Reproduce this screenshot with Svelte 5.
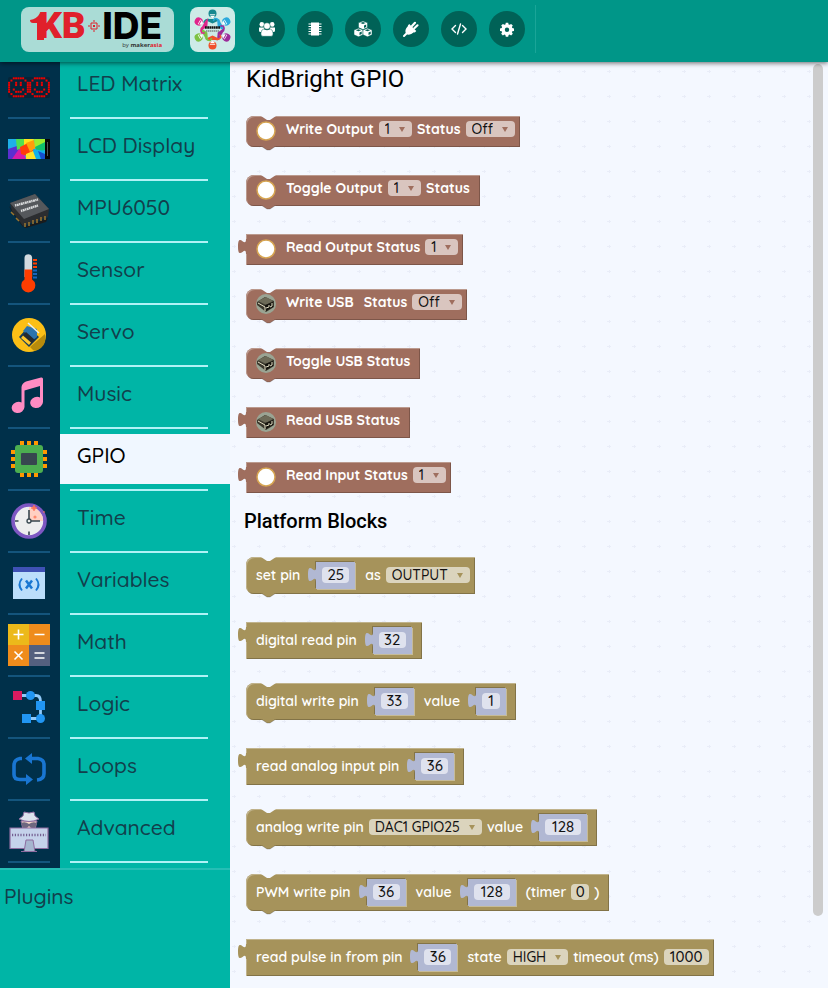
<script>
  const tools = ['Community', 'Board', 'Packages', 'Plugins', 'Source code', 'Settings'];

  const categories = [
    'LED Matrix', 'LCD Display', 'MPU6050', 'Sensor', 'Servo', 'Music', 'GPIO',
    'Time', 'Variables', 'Math', 'Logic', 'Loops', 'Advanced'
  ];
  let selected = $state('GPIO');

  const face = [
    '..#####..',
    '.#.....#.',
    '#..#.#..#',
    '#..#.#..#',
    '#.......#',
    '#.#...#.#',
    '#..###..#',
    '.#.....#.',
    '..#####..'
  ];
  const dots = face.flatMap((row, y) =>
    [...row].flatMap((c, x) => (c === '#' ? [[x, y], [x + 9, y]] : []))
  );

  const text = (t) => ({ kind: 'text', t });
  const drop = (...options) => ({ kind: 'drop', options });
  const num = (value) => ({ kind: 'num', value });
  const field = (value) => ({ kind: 'field', value });
  const pins = ['1', '2'];

  const kidbright = [
    { icon: 'led', parts: [text('Write Output'), drop(...pins), text('Status'), drop('Off', 'On')] },
    { icon: 'led', parts: [text('Toggle Output'), drop(...pins), text('Status')] },
    { icon: 'led', out: true, parts: [text('Read Output Status'), drop(...pins)] },
    { icon: 'usb', parts: [text('Write USB'), text('Status'), drop('Off', 'On')] },
    { icon: 'usb', parts: [text('Toggle USB Status')] },
    { icon: 'usb', out: true, parts: [text('Read USB Status')] },
    { icon: 'led', out: true, parts: [text('Read Input Status'), drop(...pins)] }
  ];
  const platform = [
    { parts: [text('set pin'), num('25'), text('as'), drop('OUTPUT', 'INPUT')] },
    { out: true, parts: [text('digital read pin'), num('32')] },
    { parts: [text('digital write pin'), num('33'), text('value'), num('1')] },
    { out: true, parts: [text('read analog input pin'), num('36')] },
    { parts: [text('analog write pin'), drop('DAC1 GPIO25', 'DAC2 GPIO26'), text('value'), num('128')] },
    { parts: [text('PWM write pin'), num('36'), text('value'), num('128'), text('(timer'), field('0'), text(')')] },
    { out: true, parts: [text('read pulse in from pin'), num('36'), text('state'), drop('HIGH', 'LOW'), text('timeout (ms)'), field('1000')] }
  ];
</script>

{#snippet toolIcon(name)}
  <svg viewBox="0 0 18 18" width="18" height="18" fill="#fff" aria-hidden="true">
    {#if name === 'Community'}
      <circle cx="3.800" cy="4.400" r="2.300" /><circle cx="14.200" cy="4.400" r="2.300" />
      <path d="M1 7.500h5v4.500H2.500Q1 12 1 10.500zM17 7.500h-5v4.500h3.500q1.500 0 1.500-1.500z" />
      <g stroke="#006257" stroke-width=".5"><circle cx="9" cy="6" r="3.300" /><path d="M5 16.300Q2.600 16.300 2.900 13.200q.4-4 2.900-4.200 3.200 1.900 6.400 0 2.500.2 2.900 4.200.3 3.100-2.100 3.100z" /></g>
    {:else if name === 'Board'}
      <path d="M5 2.500h8v13H5zM2.500 3.500h13v1h-13zM2.500 5.900h13v1h-13zM2.500 8.500h13v1h-13zM2.500 11.100h13v1h-13zM2.500 13.500h13v1h-13z" />
    {:else if name === 'Packages'}
      <g stroke="#006257" stroke-width=".5" stroke-linejoin="round">
        {#each [[9, 1], [4.500, 8.200], [13.500, 8.200]] as [x, y]}
          <path d="M{x} {y}l4.500 1.800v4.800l-4.500 2-4.500-2v-4.800z" />
          <path d="M{x - 2.600} {y + 2}l2.600 1 2.600-1-2.600-1zM{x + 1} {y + 4.400}v2.500l2.200-1v-2.500z" fill="#006257" stroke="none" />
        {/each}
      </g>
    {:else if name === 'Plugins'}
      <path d="M2 16l3.300-3.300" stroke="#fff" stroke-width="2" stroke-linecap="round" />
      <path d="M10 6l3-3.200M12.300 8.300l3.200-3" stroke="#fff" stroke-width="2.200" stroke-linecap="round" />
      <path d="M7.200 4l7.100 7.100-1.500 1.400-.9-.2q-4.300 3.900-7.600 1.700-2.600-3.500 1.700-7.900l-.1-.7z" />
    {:else if name === 'Source code'}
      <path d="M5.500 5.500L2 9l3.500 3.500M12.500 5.500L16 9l-3.500 3.500M10.500 4l-3 10" fill="none" stroke="#fff" stroke-width="1.400" stroke-linecap="round" />
    {:else}
      <path fill-rule="evenodd" d="M7.800 2.700h2.400l.4 1.700 1 .4 1.500-.9 1.700 1.700-.9 1.500.4 1 1.700.4v2.400l-1.700.4-.4 1 .9 1.500-1.700 1.700-1.500-.9-1 .4-.4 1.700H7.800l-.4-1.700-1-.4-1.500.9-1.700-1.700.9-1.500-.4-1L2 10.900V8.500l1.700-.4.4-1-.9-1.500 1.700-1.700 1.500.9 1-.4zM9 7.500a2.200 2.200 0 1 0 0 4.400 2.200 2.200 0 0 0 0-4.400z" />
    {/if}
  </svg>
{/snippet}

{#snippet categoryIcon(name)}
  <svg viewBox="0 0 42 42" width="42" height="42" aria-hidden="true">
    {#if name === 'LED Matrix'}
      <rect y="11" width="42" height="21" rx="2" fill="#062539" />
      {#each dots as [x, y]}<rect x={x * 2.340 + 0.100} y={y * 2.250 + 11.300} width="2" height="2" fill="#f00000" />{/each}
    {:else if name === 'LCD Display'}
      <path d="M0 11h42v20H0z" fill="#050505" /><path d="M0 11h37v20H0z" fill="#18b9e8" />
      <path d="M0 11h8l2 8-10 2z" fill="#1fb0e8" /><path d="M0 21l12-4-3 14H0z" fill="#5b2fd0" /><path d="M4 31l9-13 5 13z" fill="#d91ba8" />
      <path d="M8 11h9l-1 8-7 3z" fill="#4ee051" /><path d="M16 11h10l-4 9-6-2z" fill="#ffe11c" /><path d="M12 19l8-4 7 7-8 6-6-2z" fill="#ff3c0a" /><path d="M18 15l8-3 2 8-6 4z" fill="#ff9d0a" />
      <path d="M26 11h11v7l-10 2z" fill="#9cec2e" /><path d="M27 19l10-5v8l-8 2z" fill="#11c06c" /><path d="M25 21l12 2v8H26z" fill="#12b1ea" /><path d="M18 26l7-3 3 8H18z" fill="#ffe328" /><path d="M30 23l7 3v5h-4z" fill="#154fd0" />
      <path d="M39.500 14v14" stroke="#555" />
    {:else if name === 'MPU6050'}
      <path d="M1 16l14 17v4L4 22zM15 37l25-9-2 4-20 6z" fill="#191b1d" />
      <path d="M2 13L27 4l14 15-1 8-25 9L4 21z" fill="#2b2d30" /><path d="M2 13L27 4l14 15-25 10z" fill="#55585c" />
      <path d="M17 33v4M21 32v4M25 30v4M29 29v4M33 27v4M37 26v4M3 22l3 3M8 28l3 3" stroke="#9b7630" stroke-width="1.500" />
      <path d="M7 15.500l23-6M13 21l17-5.500" stroke="#d8dadb" stroke-width="2.400" stroke-dasharray="1.300 .5 2 .4" />
    {:else if name === 'Sensor'}
      <path d="M16.500 25V6a3.800 3.800 0 0 1 7.600 0v19z" fill="#d3dadf" /><path d="M16.500 17.500h7.600v10a7 7 0 1 1-7.600 0z" fill="#ff3d00" />
      <path d="M25 7h4v2h-4zM25 10.500h4v2h-4zM25 14h4v2h-4z" fill="#ff3d00" /><path d="M25 17.500h4v2h-4zM25 21h4v2h-4zM25 24.500h4v2h-4z" fill="#1565c0" />
    {:else if name === 'Servo'}
      <circle cx="21" cy="21" r="17" fill="#fbbf16" /><path d="M22 33l15-13q2 9-4 14-5 4-8 2z" fill="#b78b0c" />
      <path d="M11 23l9-10 11 10-10 10z" fill="#143c5c" /><path d="M15 17l4-5 10 3v8l-4 3z" fill="#2c74ae" /><path d="M14 22l4-4 9 8-5 5z" fill="#252a30" /><path d="M13 24l2-2.500 8 7-2 2.500z" fill="#ffc72b" /><path d="M20 9l11 10" stroke="#edf0ed" stroke-width="1.500" />
    {:else if name === 'Music'}
      <path d="M13.500 11Q14 7 18 5.500L33 1.500q2-.5 2 1.500v23a6.500 5.500-15 1 1-3-4.500V10l-15.500 4.500V31a6.500 5.500-15 1 1-3-4.500z" fill="#ff8cc3" />
    {:else if name === 'GPIO'}
      <path d="M12 3h4v36h-4zM19 3h4v36h-4zM26 3h4v36h-4zM3 12h36v4H3zM3 19h36v4H3zM3 26h36v4H3z" fill="#ff9800" />
      <rect x="7" y="7" width="28" height="28" rx="3" fill="#4caf50" /><rect x="13" y="15" width="16" height="12" rx="1" fill="#37474f" />
    {:else if name === 'Time'}
      <circle cx="21" cy="21" r="16" fill="#eee" stroke="#7e57c2" stroke-width="3.600" /><path d="M21 21V7a14 14 0 0 1 14 14z" fill="#ffd0c2" />
      <path d="M21 19V10M23 21h9M21 35v-3.500M7 21h3.500" stroke="#37474f" stroke-width="1.600" /><circle cx="21" cy="21" r="2" fill="#eee" stroke="#37474f" stroke-width="1.300" />
      <path d="M26 5l1 2 2 1-2 1-1 2-1-2-2-1 2-1zM36 11v2M35 12h2" fill="#ff7558" stroke="#ff7558" stroke-width=".6" /><circle cx="27" cy="17" r="1.600" fill="#ff8a6e" />
    {:else if name === 'Variables'}
      <path d="M5 5h32v32H5z" fill="#bbdefb" /><path d="M5 5h32v5H5z" fill="#3f51b5" />
      <path d="M14 16.500q-5 6 0 12M28 16.500q5 6 0 12" fill="none" stroke="#1976d2" stroke-width="1.900" /><path d="M18 18.500l6 8M24 18.500l-6 8" stroke="#1976d2" stroke-width="2.500" />
    {:else if name === 'Math'}
      <path d="M0 0h21v21H0z" fill="#ecb91a" /><path d="M21 0h21v21H21zM0 21h21v21H0z" fill="#ef8c1c" /><path d="M21 21h21v21H21z" fill="#54607f" />
      <path d="M5.500 10.500h10M10.500 5.500v10M26.500 10.500h10M6.500 27.500l8 8M14.500 27.500l-8 8M26.500 29h10M26.500 34h10" stroke="#fff" stroke-width="1.600" />
    {:else if name === 'Logic'}
      <path d="M10 9.500h18q4.500 0 4.500 6v17H18" fill="none" stroke="#90caf9" stroke-width="2.800" />
      <path d="M5 5h9v9H5z" fill="#d81b60" /><path d="M28 15h9v9h-9zM14 28h9v9h-9z" fill="#2196f3" /><circle cx="22.500" cy="9.500" r="4.500" fill="#2196f3" /><circle cx="32.500" cy="32.500" r="4.500" fill="#2196f3" />
    {:else if name === 'Loops'}
      <path d="M14 10.500h-2q-6 1-6 7v9q0 5 6 5h9M21 10.500h9q6 1 6 6v9q0 6-7 6.500" fill="none" stroke="#1976d2" stroke-width="3.600" />
      <path d="M24 5v11l-7-5.500zM18 26v11l7-5.500z" fill="#1976d2" />
    {:else}
      <path d="M13 11h16l-2 9H15z" fill="#f8d9c8" stroke="#8d6c9f" /><path d="M13 13q4-2 8 1 4-3 8-1l-2 5q-4 1-6-2-2 3-6 2z" fill="#6f6880" />
      <path d="M11 9q10 5 20 0l-4-3-1-4-5 1-5-1-1 4z" fill="#dde3ee" stroke="#8d6c9f" />
      <path d="M2 18h38v20.500H2z" fill="#c5d2ea" stroke="#8d6c9f" stroke-width="1.200" /><path d="M4 25h34" stroke="#745f91" stroke-width="2.500" stroke-dasharray="1.200 1.600" />
      <path d="M18 30h7l2 12H16z" fill="#a6b6cf" stroke="#8d6c9f" /><path d="M13 41.500h16" stroke="#8d6c9f" />
    {/if}
  </svg>
{/snippet}

{#snippet outputTab(cls)}
  <svg class="tab {cls}" viewBox="0 0 9 20" width="9" height="20" aria-hidden="true">
    <path d="M9 20H8c0-10-8 8-8-7.500S8 15 8 5h1z" fill="currentColor" />
  </svg>
{/snippet}

{#snippet blockView(block, tone)}
  <li class="block {tone}" class:out={block.out}>
    {#if block.out}
      {@render outputTab('outer')}
    {:else}
      <svg class="notch" viewBox="0 0 15 5" width="15" height="5" aria-hidden="true"><path d="M0 0h15l-6 4H6z" fill="#f4f8ff" /></svg>
      <svg class="foot" viewBox="0 0 15 5" width="15" height="5" aria-hidden="true"><path d="M0 0h15L9 4H6z" fill="currentColor" /><path d="M1 .7L6 4h3l5-3.300" fill="none" stroke="#0003" /></svg>
    {/if}
    {#if block.icon === 'led'}
      <svg class="pic" viewBox="0 0 20 20" width="20" height="20" aria-hidden="true"><circle cx="10" cy="10" r="9" fill="#fff" stroke="#d6a552" stroke-width="1.500" /></svg>
    {:else if block.icon === 'usb'}
      <svg class="pic" viewBox="0 0 20 20" width="20" height="20" aria-hidden="true">
        <circle cx="10" cy="10" r="10" fill="#9aa493" /><path d="M1 8l8-5 9 4v6l-8 5-9-7z" fill="#3b382d" /><path d="M2 7l8-4 7 4-7 4z" fill="#6d6b58" /><path d="M9 11l8-3v5l-7 4z" fill="#16150f" /><path d="M10 14l3-1v-2M14 13l2-1V9M2 9l7 4v4" fill="none" stroke="#e3dfc4" />
      </svg>
    {/if}
    {#each block.parts as part}
      {#if part.kind === 'text'}
        <span class="label">{part.t}</span>
      {:else if part.kind === 'drop'}
        <span class="chip drop">
          <select aria-label="Option">
            {#each part.options as option}<option>{option}</option>{/each}
          </select>
          <svg viewBox="0 0 6 5" width="6" height="5" aria-hidden="true"><path d="M0 0h6L3 5z" fill="currentColor" /></svg>
        </span>
      {:else if part.kind === 'field'}
        <input class="chip" aria-label="Value" value={part.value} style:width="{part.value.length * 9 + 9}px" />
      {:else}
        <span class="value">
          {@render outputTab('inner')}
          <input class="chip" aria-label="Number" value={part.value} style:width="{part.value.length * 9 + 9}px" />
        </span>
      {/if}
    {/each}
  </li>
{/snippet}

<div class="app">
  <header>
    <a class="logo" href="#home" aria-label="KB IDE by makerasia">
      <span class="name">
        <svg class="hook" viewBox="0 0 14 27" width="14" height="27" aria-hidden="true"><path d="M0 7Q7 6 10 0h4v27H7V10H3Q0 10 0 7z" fill="#e0202b" /></svg>
        <span class="kb">KB</span>
        <svg class="spark" viewBox="0 0 12 12" width="12" height="12" aria-hidden="true"><path d="M3 3h6v6H3z" fill="none" stroke="#e0202b" /><path d="M5 5h2v2H5z" fill="#e0202b" /><path d="M6 0v2M6 10v2M0 6h2M10 6h2" stroke="#e0202b" /></svg>
        <span class="ide">IDE</span>
      </span>
      <span class="by">by <b>maker<i>asia</i></b></span>
    </a>
    <a class="community" href="#community" aria-label="Kidbright community">
      <svg viewBox="0 0 45 45" width="45" height="45" aria-hidden="true">
        {#each ['#16888f', '#2aa9dc', '#9c2b9a', '#f0512b', '#7cc243', '#e0258b'] as color, i}
          <g transform="rotate({i * 60} 22.500 22.500)">
            <path d="M15 13l4-1h7l4 1-7.500 3.500z" fill={color} />
            <path d="M19 12.500q-3.500-.5-5 2.500l1.500 2.500" fill="none" stroke={color} stroke-width="1.400" />
            <circle cx="22.500" cy="6.500" r="4" fill={color} /><path d="M19.800 7h5.400q-.4 3.600-2.700 4-2.300-.4-2.700-4z" fill="#fff" /><path d="M20 8.200h5" stroke={color} />
          </g>
        {/each}
        <path d="M15 20.500h15" stroke="#111" stroke-width="2.600" stroke-dasharray="1.800 .4" /><path d="M16 24h13" stroke="#555" stroke-width="1" stroke-dasharray="1.500 .5" />
      </svg>
    </a>
    <div class="tools">
      {#each tools as tool}
        <button aria-label={tool}>{@render toolIcon(tool)}</button>
      {/each}
    </div>
  </header>

  <main>
    <nav>
      <ul>
        {#each categories as name}
          <li>
            <span class="rail"><span class="pict">{@render categoryIcon(name)}</span></span>
            <span class="entry" class:selected={selected === name}>
              <button onclick={() => (selected = name)}>{name}</button>
            </span>
          </li>
        {/each}
      </ul>
      <button class="plugins">Plugins</button>
    </nav>

    <section>
      <svg class="grid" width="100%" height="100%" aria-hidden="true">
        <defs><pattern id="crosses" width="25" height="25" patternUnits="userSpaceOnUse"><path d="M2 9.500h4M4.500 8v3" stroke="#e9edf8" /></pattern></defs>
        <rect width="100%" height="100%" fill="url(#crosses)" />
      </svg>
      <h1>KidBright GPIO</h1>
      <ul class="stack">
        {#each kidbright as block}{@render blockView(block, 'brown')}{/each}
      </ul>
      <h2>Platform Blocks</h2>
      <ul class="stack">
        {#each platform as block}{@render blockView(block, 'gold')}{/each}
      </ul>
      <div class="scrollbar"></div>
    </section>
  </main>
</div>

<style>
  :global(body) { margin: 0; }
  .app { display: flex; flex-direction: column; height: 100vh; overflow: hidden; font-family: Quicksand, Inter, "Liberation Sans", sans-serif; }
  button { font: inherit; border: 0; padding: 0; background: none; cursor: pointer; }
  ul { list-style: none; margin: 0; padding: 0; }

  header { display: flex; align-items: flex-start; flex: none; height: 62px; box-sizing: border-box; padding: 7px 21px 0; background: #009688; box-shadow: 0 1px 5px #0009; position: relative; z-index: 2; }
  .logo { display: flex; flex-direction: column; width: 153px; height: 45px; box-sizing: border-box; padding: 4px 12px 0 9px; border-radius: 8px; background: #aadcd6; text-decoration: none; color: #000; }
  .name { display: flex; align-items: center; justify-content: space-between; height: 30px; font: 900 37px/30px Roboto, sans-serif; }
  .hook { margin-right: -8px; }
  .kb { color: #e0202b; }
  .ide { font-family: Inter, sans-serif; font-weight: 800; }
  .by { align-self: flex-end; font: 6px/9px "Open Sans", sans-serif; color: #333; }
  .by i { font-style: normal; color: #e0202b; }
  .community { display: block; height: 45px; margin-left: 16px; border-radius: 8px; background: #cdebe7; }
  .tools { display: flex; gap: 12px; margin: -2px 0 0 14px; padding: 6px 10px 6px 0; border-right: 1px solid #1aa598; }
  .tools button { display: grid; place-items: center; width: 36px; height: 36px; border-radius: 50%; background: #006257; }

  main { display: flex; flex: 1; min-height: 0; }
  nav { flex: none; width: 230px; background: #00b5a6; }
  nav ul { border-bottom: 2px solid #26beb5; }
  nav li { display: flex; height: 62px; }
  .rail { width: 60px; background: #00304a; }
  .pict { display: block; width: 42px; height: 51px; margin-left: 8px; padding-top: 4px; border-bottom: 2px solid #14557d; }
  .pict svg { display: block; }
  .entry { flex: 1; }
  .entry button { display: block; width: 100%; height: 50px; padding: 0 0 8px 17px; text-align: left; font-size: 21px; font-weight: 500; color: #123f4c; }
  .entry::after { content: ""; display: block; width: 138px; height: 2px; margin: 5px 0 0 10px; background: #b0f2f6; }
  .entry.selected button { background: #f0f7ff; color: #000; }
  .plugins { padding: 11px 4px; font-size: 21px; line-height: 30px; font-weight: 500; color: #123f4c; }

  section { position: relative; flex: 1; min-width: 0; overflow: hidden; background: #f4f8ff; }
  .grid { position: absolute; inset: 0; }
  h1, h2 { position: relative; margin: 0; color: #000; font-family: Roboto, sans-serif; }
  h1 { padding: 1px 16px 21px; font-size: 24px; line-height: 32px; font-weight: 400; }
  h2 { padding: 0 14px 20px; margin-top: -12px; font-size: 20px; line-height: 32px; font-weight: 500; }
  .stack { display: flex; flex-direction: column; align-items: flex-start; padding-left: 16px; }

  .block { position: relative; display: flex; align-items: flex-start; gap: 10px; box-sizing: border-box; padding: 5px 10px; margin-bottom: 28px; border-radius: 8px 0 0 8px; white-space: nowrap; }
  .block.out { margin-bottom: 24px; border-radius: 0; }
  .brown { height: 31px; background: #9f6e5e; color: #9f6e5e; --soft: #d9c5bf; box-shadow: inset 1px 1px #bb9a8e, inset -1px -1px #7d5649; }
  .gold { height: 37px; background: #a6935b; color: #a6935b; --soft: #dbd4bd; box-shadow: inset 1px 1px #c0b38c, inset -1px -1px #827347; }
  .gold .label, .gold > .chip { margin-top: 5px; }
  .notch { position: absolute; left: 15px; top: 0; }
  .foot { position: absolute; left: 15px; top: 100%; margin-top: -1px; }
  .tab { position: absolute; left: -8px; top: 0; }
  .pic { flex: none; }
  .label { color: #fff; font-size: 14px; line-height: 16px; font-weight: 700; }
  .gold .label { font-weight: 600; }
  .chip { display: flex; align-items: center; height: 16px; margin: 0 -5px; box-sizing: border-box; border: 0; border-radius: 4px; background: var(--soft); }
  input.chip { padding: 0; text-align: center; font: 500 15px/16px Quicksand, Inter, sans-serif; color: #111; }
  .drop { padding: 0 7px 0 6px; gap: 9px; }
  select { appearance: none; field-sizing: content; border: 0; padding: 0; background: none; font: 500 14px/16px Quicksand, Inter, sans-serif; color: #111; }
  .value { position: relative; display: block; height: 27px; box-sizing: border-box; padding: 5px 6px 6px; margin-left: 6px; background: #b1b8d3; color: #b1b8d3; --soft: #dfe2ee; box-shadow: -1px -1px #837448, 1px 1px #c6bb98; }
  .value .chip { margin: 0; }
  .scrollbar { position: absolute; right: 5px; top: 2px; width: 10px; height: 92%; border-radius: 5px; background: #ccc; }
</style>
